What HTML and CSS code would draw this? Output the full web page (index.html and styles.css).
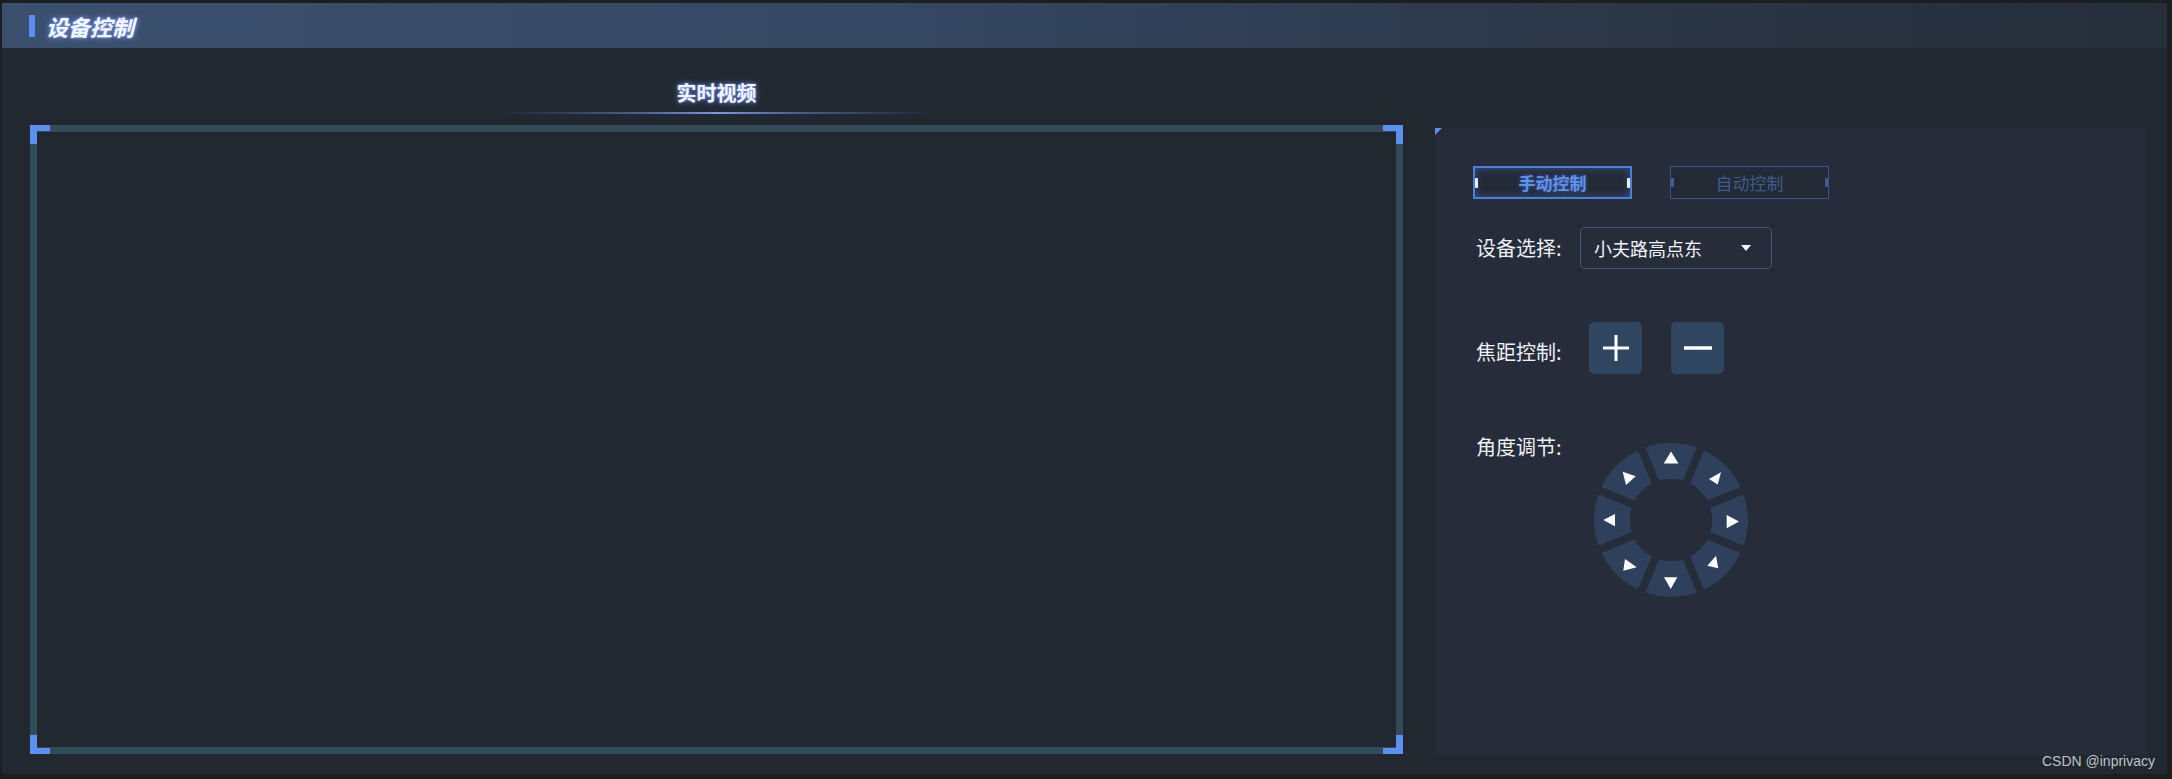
FILE: index.html
```
<!DOCTYPE html>
<html lang="zh-CN">
<head>
    <meta charset="UTF-8">
    <title>设备控制</title>
    <link rel="stylesheet" href="styles.css">
</head>
<body>
    <div class="screen">
        <!-- Title bar -->
        <div class="screen-head">
            <span class="head-mark"></span>
            <span class="head-title">设备控制</span>
        </div>

        <div class="screen-body">
            <!-- Live video -->
            <div class="video-col">
                <div class="video-title">实时视频</div>
                <div class="video-line"></div>
                <div class="video-frame">
                    <span class="corner corner-tl"></span>
                    <span class="corner corner-tr"></span>
                    <span class="corner corner-bl"></span>
                    <span class="corner corner-br"></span>
                </div>
            </div>

            <!-- Control panel -->
            <div class="ctrl-panel">
                <div class="mode-tabs">
                    <button class="mode-tab active">手动控制</button>
                    <button class="mode-tab">自动控制</button>
                </div>

                <div class="ctrl-row select-row">
                    <span class="ctrl-label">设备选择:</span>
                    <div class="device-select">
                        <span>小夫路高点东</span>
                        <span class="caret"></span>
                    </div>
                </div>

                <div class="ctrl-row focus-row">
                    <span class="ctrl-label">焦距控制:</span>
                    <div class="focus-btns">
                        <button class="focus-btn" title="放大">
                            <svg width="28" height="28" viewBox="0 0 28 28"><path d="M14 1v26M1 14h26" stroke="#fff" stroke-width="3"/></svg>
                        </button>
                        <button class="focus-btn" title="缩小">
                            <svg width="28" height="28" viewBox="0 0 28 28"><path d="M0 14h28" stroke="#fff" stroke-width="3.5"/></svg>
                        </button>
                    </div>
                </div>

                <div class="ctrl-row angle-row">
                    <span class="ctrl-label">角度调节:</span>
                    <svg class="ptz-ring" width="160" height="160" viewBox="0 0 160 160">
                        <circle cx="80" cy="80" r="59" fill="none" stroke="#2e405c" stroke-width="36"/>
                        <g stroke="#262c3a" stroke-width="8">
                            <line x1="80" y1="80" x2="160" y2="47"/>
                            <line x1="80" y1="80" x2="113" y2="0"/>
                            <line x1="80" y1="80" x2="47" y2="0"/>
                            <line x1="80" y1="80" x2="0" y2="47"/>
                            <line x1="80" y1="80" x2="0" y2="113"/>
                            <line x1="80" y1="80" x2="47" y2="160"/>
                            <line x1="80" y1="80" x2="113" y2="160"/>
                            <line x1="80" y1="80" x2="160" y2="113"/>
                        </g>
                        <circle cx="80" cy="80" r="41" fill="#262c3a"/>
                        <g fill="#fff">
                            <polygon points="80,11.5 72.8,23.5 87.5,23.5"/>
                            <polygon points="130,32.3 118,39 126.7,44.5"/>
                            <polygon points="148,81.5 135.7,75 135.7,88.3"/>
                            <polygon points="125,115.7 127.3,128.3 116.3,125.7"/>
                            <polygon points="73,137.3 86.3,137.3 79.7,149"/>
                            <polygon points="34,119 45.7,127.3 32.3,130.7"/>
                            <polygon points="12.3,80 24,74 24,86.3"/>
                            <polygon points="31.7,31.7 44.7,36.3 35,45"/>
                        </g>
                    </svg>
                </div>
            </div>
        </div>
    </div>

    <div class="watermark">CSDN @inprivacy</div>
</body>
</html>
```

FILE: styles.css
```
/* General */
body {
    margin: 0;
    background-color: #1d1e20;
    font-family: "Noto Sans CJK SC", "Noto Sans", sans-serif;
    color: #e8ecf2;
}

.screen {
    margin: 3px 5px 5px 2px;
    height: 771px;
    display: flex;
    flex-direction: column;
}

/* Header */
.screen-head {
    height: 45px;
    flex: none;
    display: flex;
    align-items: center;
    padding-left: 27px;
    background: linear-gradient(90deg, #3b506f 0%, #354864 40%, #2b3647 75%, #262e3a 100%);
}

.head-mark {
    width: 6px;
    height: 22px;
    background-color: #5b8ef0;
}

.head-title {
    margin-left: 11px;
    font-size: 22px;
    font-weight: bold;
    font-style: italic;
    color: #f4f7ff;
    text-shadow: 0 0 6px #7a9cff, 0 0 2px #9fb8ff;
}

/* Body */
.screen-body {
    flex: 1;
    display: flex;
    background-color: #222830;
    padding-left: 28px;
    position: relative;
}

.video-col {
    width: 1373px;
    display: flex;
    flex-direction: column;
    align-items: center;
}

.video-title {
    margin-top: 32px;
    font-size: 20px;
    line-height: 26px;
    font-weight: bold;
    color: #f2f5ff;
    text-shadow: 0 0 6px #6f90ff, 0 0 2px #9cb4ff;
}

.video-line {
    margin-top: 6px;
    width: 440px;
    height: 2px;
    background: linear-gradient(90deg, rgba(100, 130, 220, 0) 0%, rgba(100, 130, 220, 0.25) 15%, rgba(100, 130, 220, 0.6) 32%, #7596ee 50%, rgba(100, 130, 220, 0.6) 68%, rgba(100, 130, 220, 0.25) 85%, rgba(100, 130, 220, 0) 100%);
}

.video-frame {
    margin-top: 11px;
    width: 100%;
    height: 629px;
    box-sizing: border-box;
    border: 7px solid #334a59;
    position: relative;
}

.corner {
    position: absolute;
    width: 13px;
    height: 13px;
    border: 0 solid #5b8ff0;
}

.corner-tl { top: -7px; left: -7px; border-top-width: 6px; border-left-width: 7px; }
.corner-tr { top: -7px; right: -7px; border-top-width: 6px; border-right-width: 7px; }
.corner-bl { bottom: -7px; left: -7px; border-bottom-width: 6px; border-left-width: 7px; }
.corner-br { bottom: -7px; right: -7px; border-bottom-width: 6px; border-right-width: 7px; }

/* Control panel */
.ctrl-panel {
    margin-top: 80px;
    margin-left: 32px;
    width: 712px;
    height: 627px;
    box-sizing: border-box;
    padding: 38px 0 0 38px;
    background-color: #262c3a;
    position: relative;
}

.ctrl-panel::before {
    content: "";
    position: absolute;
    top: 0;
    left: 0;
    border-top: 7px solid #5b8ff0;
    border-right: 7px solid transparent;
}

.mode-tabs {
    display: flex;
    gap: 38px;
}

.mode-tab {
    width: 159px;
    height: 33px;
    padding: 0;
    background-color: #232a36;
    border: 1px solid #37578c;
    color: #3c5c8c;
    font-family: inherit;
    font-size: 17px;
    position: relative;
    cursor: pointer;
}

.mode-tab::before,
.mode-tab::after {
    content: "";
    position: absolute;
    top: 11px;
    width: 3px;
    height: 9px;
    border-radius: 1px;
    background-color: #3f5f8f;
}

.mode-tab::before { left: 0; }
.mode-tab::after { right: 0; }

.mode-tab.active {
    border: 2px solid #4a7fdc;
    color: #5d92f2;
    font-weight: bold;
    box-shadow: inset 0 0 8px rgba(80, 130, 230, 0.45);
    text-shadow: 0 0 4px rgba(90, 140, 240, 0.6);
}

.mode-tab.active::before,
.mode-tab.active::after {
    top: 10px;
    height: 10px;
    background-color: #e8eef8;
}

.ctrl-row {
    display: flex;
    align-items: center;
    padding-left: 3px;
}

.ctrl-label {
    width: 104px;
    flex: none;
    font-size: 20px;
    line-height: 26px;
    color: #eef1f6;
}

.select-row {
    margin-top: 28px;
}

.device-select {
    width: 192px;
    height: 42px;
    box-sizing: border-box;
    border: 1px solid #3c5882;
    border-radius: 5px;
    display: flex;
    align-items: center;
    justify-content: space-between;
    padding: 0 20px 0 13px;
    font-size: 18px;
    color: #f0f3f8;
}

.caret {
    width: 0;
    height: 0;
    border-left: 5px solid transparent;
    border-right: 5px solid transparent;
    border-top: 6px solid #f0f3f8;
}

.focus-row {
    margin-top: 53px;
}

.focus-row .ctrl-label {
    margin-top: 8px;
}

.focus-btns {
    display: flex;
    gap: 29px;
    margin-left: 9px;
}

.focus-btn {
    width: 53px;
    height: 52px;
    padding: 0;
    border: none;
    border-radius: 5px;
    background-color: #2f4560;
    display: flex;
    align-items: center;
    justify-content: center;
    cursor: pointer;
}

.angle-row {
    margin-top: 60px;
    align-items: flex-start;
}

.ptz-ring {
    margin-left: 11px;
    margin-top: 6px;
}

/* Watermark */
.watermark {
    position: absolute;
    right: 17px;
    top: 753px;
    font-family: "Liberation Sans", Arial, sans-serif;
    font-size: 14px;
    line-height: 16px;
    color: #bfc2c6;
}
```
